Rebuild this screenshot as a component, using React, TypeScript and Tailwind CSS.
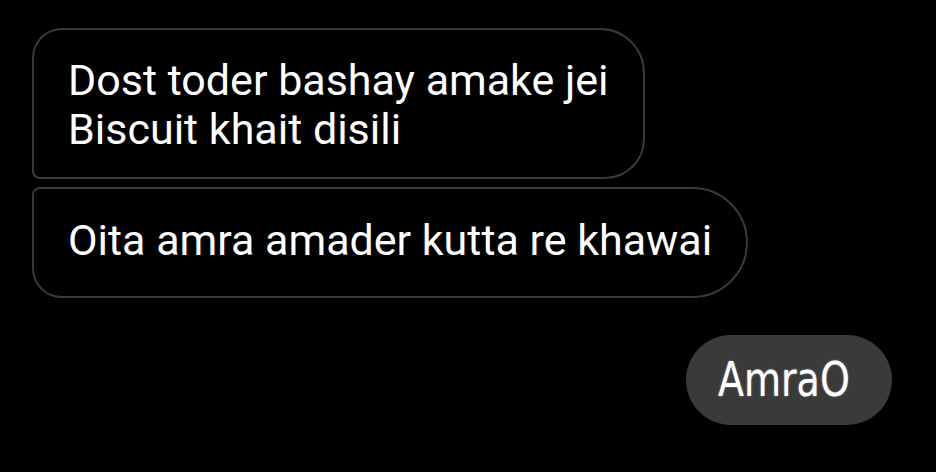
import React from "react";

export default function App() {
  return (
    <div className="w-[936px] h-[472px] bg-black overflow-hidden flex flex-col" style={{ fontFamily: "Roboto, sans-serif" }}>
      <div className="ml-[32px] mt-[28px] flex flex-col gap-[8px] items-start">
        <div className="w-[613px] h-[151px] border-2 border-[#3a3a3a] rounded-[30px_45px_40px_8px] pl-[34px] pt-[26px] text-white text-[43px] leading-[49px] whitespace-nowrap">
          <div>Dost toder bashay amake jei</div>
          <div>Biscuit khait disili</div>
        </div>
        <div className="w-[716px] h-[111px] border-2 border-[#3a3a3a] rounded-[8px_56px_56px_30px] pl-[34px] pt-[27px] text-white text-[43px] leading-[49px] whitespace-nowrap">
          <div>Oita amra amader kutta re khawai</div>
        </div>
      </div>
      <div className="flex justify-end mr-[44px] mt-[37px]">
        <div
          className="w-[206px] h-[90px] rounded-full bg-[#3a3a3a] flex items-center justify-center text-white text-[48px] pb-[2px] pr-[10px]"
          style={{ fontFamily: "'DejaVu Sans Condensed', 'DejaVu Sans', sans-serif" }}
        >
          <span className="inline-block scale-x-[0.88] [text-shadow:0_0_2px_rgba(255,255,255,0.5)]">AmraO</span>
        </div>
      </div>
    </div>
  );
}
